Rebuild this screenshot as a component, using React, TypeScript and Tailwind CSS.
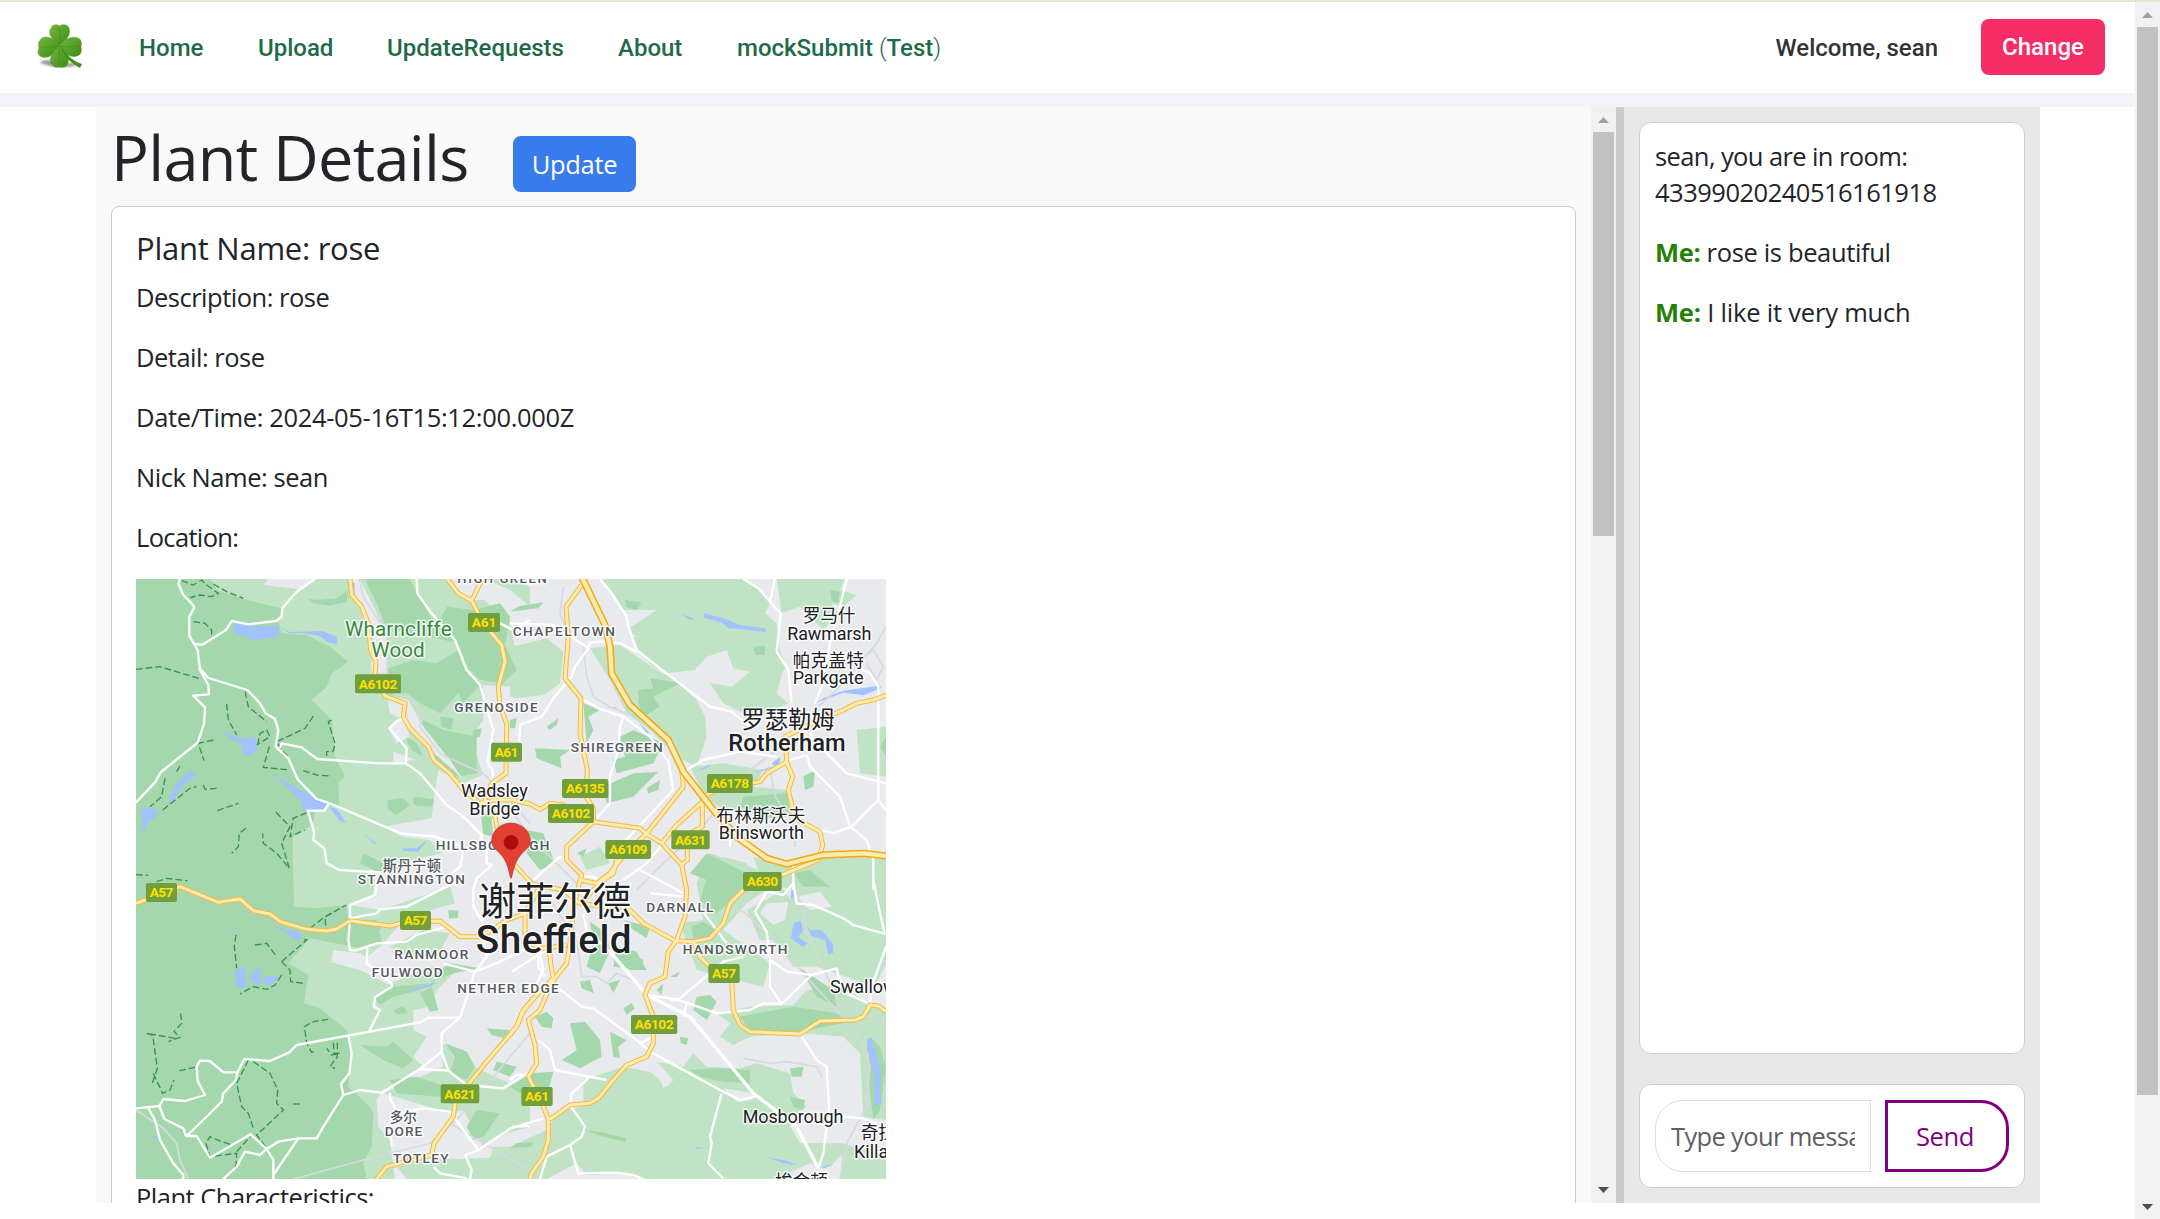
import React from "react";

/* ---------- Map data: four tiles sharing one coordinate system ---------- */

const tileOffsets = ["translate(0 0)", "translate(1140 0)", "translate(0 930)", "translate(1140 930)"];

const lightGreen: string[][] = [
  [
    "18,27 415,27 400,45 510,58 560,27 955,27 1010,90 1060,90 1140,150 1165,290 1150,350 1060,345 1060,450 1025,500 1058,615 1000,640 925,600 915,660 930,700 905,745 760,770 820,800 900,810 935,850 850,870 720,900 735,960 18,960",
    "1060,27 1150,27 1200,50 1200,110 1140,60",
    "1980,870 2268,850 2268,1180 2235,1250 2060,1190 1990,1190 1930,1110 1890,1110 1850,1020 1960,960 1985,990",
    "1700,940 1740,850 1960,925 1850,1000 1780,1080 1920,1180 1900,1250 1700,1200 1650,1060 1720,1050",
  ],
  [
    "0,232 110,205 160,245 150,340 100,375 20,385 0,380",
    "275,27 705,27 750,60 780,100 765,130 800,160 810,240 835,310 810,350 845,395 740,445 700,430 640,400 600,340 665,350 720,305 670,295 650,240 590,260 555,300 470,310 430,290 380,240 345,160 345,130 310,70",
    "240,235 330,225 440,300 480,320 560,390 585,440 590,500 560,590 500,560 420,480 350,430 300,330",
    "800,27 1005,27 990,60 1040,75 1000,110 965,100 985,130 940,180 870,110 815,130",
    "1040,480 1128,470 1128,620 1050,610",
    "540,590 640,580 760,600 730,650 830,660 840,740 770,740 650,720 590,690",
    "730,860 830,885 930,870 960,960 850,960 760,940",
    "640,860 710,880 730,940 620,930 540,910 600,880",
    "210,860 270,830 300,880 230,900",
    "1060,865 1128,865 1128,960 1080,960",
  ],
  [
    "18,0 735,0 730,45 660,75 750,90 960,20 975,70 830,110 760,190 690,250 600,245 690,270 790,320 850,330 850,450 890,470 850,530 880,560 830,600 760,630 740,660 745,740 780,780 795,897 18,897",
    "780,200 880,150 960,160 920,230 850,240",
    "760,320 890,260 980,270 920,330 900,380 850,390 760,380 730,360",
    "930,490 1000,510 1030,560 1140,610 1200,600 1200,740 1130,760 1060,800 1000,690 960,700 760,640 850,600 940,560",
    "800,860 900,840 1080,833 1090,800 1200,800 1200,897 830,897",
  ],
  [
    "220,600 340,560 420,575 470,620 490,600 440,545 520,560 550,520 590,560 690,565 740,550 840,580 850,640 890,680 830,720 870,790 1000,790 1000,820 960,860 900,850 830,880 860,897 400,897 340,880 230,885 200,850 110,897 0,897 0,800 110,750 150,690 220,680",
    "850,30 900,0 1128,0 1128,240 1080,320 970,250 930,230 860,200 800,150 760,90 830,90",
    "620,400 720,380 850,375 890,330 990,320 1080,370 1128,400 1128,720 1060,710 1050,520 1000,470 880,460 720,470 670,495 630,470 660,430",
    "1000,790 1128,830 1128,897 990,897",
  ],
];

const forest: string[][] = [
  [
    "18,27 240,27 262,60 340,88 455,115 445,155 455,190 530,195 600,230 655,275 605,310 590,350 545,390 605,450 615,560 645,620 625,640 628,705 560,700 548,765 488,800 490,960 18,960",
    "705,27 840,27 862,75 905,145 1050,165 1010,200 965,215 900,200 770,175 740,100",
    "775,295 850,270 920,280 985,240 1010,300 1050,345 1000,400 985,370 930,430 870,400 830,370 775,375",
    "950,110 1030,120 1110,100 1140,140 1125,225 1160,300 1120,340 1050,330 1010,290 975,200 925,160",
    "530,85 560,90 620,85 655,60 650,95 600,107 550,100",
    "850,680 935,690 900,710 850,705",
    "772,690 820,685 840,705 800,735 775,720",
    "880,450 940,480 1040,500 1040,610 980,620 910,560 860,480",
    "820,495 860,520 880,560 845,540",
    "1050,720 1085,740 1090,800 1050,790",
    "930,440 970,445 965,480 935,470",
    "1030,480 1055,475 1050,500 1025,505",
    "700,850 760,880 840,890 740,905 690,880",
    "1680,910 1730,850 1850,910 1840,960 1760,1030 1710,990 1730,930",
    "1190,780 1240,790 1275,880 1230,900 1190,850",
    "1380,1055 1430,1090 1440,1140 1410,1210 1370,1190 1390,1120",
    "1460,1130 1540,1170 1530,1200 1450,1190",
    "1350,1235 1380,1230 1392,1270 1355,1255",
  ],
  [
    "30,108 100,97 85,115 0,125",
    "345,90 395,97 380,120 350,112",
    "730,230 765,228 765,255 735,255",
    "385,360 430,355 420,325 510,340 430,380 450,410 400,440 385,400",
    "330,500 370,480 460,520 430,580 320,610 310,570 345,560",
    "220,400 270,420 235,440 250,480 230,520",
    "110,470 145,445 140,465 120,480",
    "75,535 180,540 150,560 155,595 80,565",
    "280,650 370,610 445,605 370,680 290,700",
    "410,655 450,630 445,660 415,670",
    "880,620 915,600 910,650 885,660",
    "700,680 830,670 845,740 760,745 690,710",
    "960,60 990,65 985,100 965,95",
    "200,850 230,835 220,860",
    "850,910 900,900 960,950 880,950",
    "1110,530 1128,500 1128,560",
    "0,450 20,445 15,475 0,475",
  ],
  [
    "18,0 490,0 492,80 560,85 650,75 655,120 740,120 755,185 690,205 540,175 475,250 535,285 522,370 570,385 650,450 665,520 655,620 720,680 730,700 725,800 700,850 710,897 18,897",
    "735,355 785,320 900,310 850,335 790,350 750,375",
    "690,495 770,500 790,485 850,540 820,565 760,540",
    "870,340 905,320 925,390 900,395",
    "930,270 960,250 1050,265 970,280 920,300",
    "955,90 985,92 983,115 957,115",
    "690,150 760,130 740,170 700,180",
    "945,490 1010,515 1035,560 1010,600 960,580 975,530",
    "780,600 860,590 950,620 930,650 800,640",
    "1040,690 1110,700 1060,770 1030,780 1010,740",
    "1070,445 1140,450 1120,475 1085,465",
    "790,390 820,378 832,400 800,403",
    "1100,545 1160,560 1140,590 1090,570",
  ],
  [
    "330,200 380,215 410,270 360,270 310,240",
    "545,140 580,125 620,150 595,185 550,180",
    "180,430 225,425 270,480 275,530 210,565 155,540 200,510",
    "300,455 350,480 325,500 330,535 310,530",
    "75,410 110,395 130,415 125,445 95,440",
    "560,350 600,345 620,365 590,420 550,390",
    "850,380 980,400 1020,425 870,455 720,450 690,410",
    "870,265 910,290 970,330 980,380 920,350",
    "540,570 630,565 720,570 720,610 640,605 570,590",
    "840,650 885,660 880,690 850,680",
    "220,750 270,755 350,775 345,785 280,770",
    "60,580 130,575 110,650 30,640 0,620",
    "1080,470 1110,500 1128,560 1110,690 1090,720 1075,600",
    "840,565 880,560 875,590 845,590",
    "340,120 420,140 410,175 370,150",
    "480,290 510,275 500,292",
    "440,330 460,310 455,345",
    "340,385 365,370 375,385 350,405",
    "510,470 535,475 530,495 512,490",
    "295,310 330,300 310,340",
    "20,790 70,785 65,800 0,805",
  ],
];

const townPatches: string[][] = [
  [
    "660,27 690,27 740,130 770,200 772,310 722,310 725,250 690,110",
    "770,375 835,390 880,470 960,570 1000,630 970,600 900,540 820,450 780,430",
    "775,475 820,440 840,500 800,520",
    "790,545 860,570 790,580",
    "915,660 1000,640 1050,700 1060,800 900,790 770,775 905,745",
  ],
  ["820,300 870,280 860,350 835,400 800,370", "250,120 440,120 350,180 380,200 300,200"],
  ["610,210 690,220 740,250 660,250 605,245"],
  ["440,560 490,600 460,625", "770,70 835,65 825,120 790,135 750,100", "860,50 930,35 965,80 900,90", "640,625 735,640 725,660 680,665"],
];

const water: string[][] = [
  [
    "308,158 355,168 445,168 445,200 375,211 315,190",
    "445,170 480,186 575,183 620,200 622,222 590,215 570,198 520,190 480,190",
    "283,483 335,506 375,500 383,540 342,563 337,525 290,500",
    "183,601 200,618 165,640 118,707 115,690 140,640",
    "30,718 70,712 85,737 55,755 45,782 33,778 38,740",
    "432,612 500,655 560,685 597,700 585,722 515,722 518,700 470,650",
    "597,710 622,718 648,758 630,753",
    "700,788 738,820 735,824",
    "815,835 860,835 890,812 865,845 820,842",
    "265,435 272,472 266,460",
    "668,38 674,38 673,70",
  ],
  [
    "583,130 650,148 690,165 765,175 768,187 700,178 655,175 635,158 580,142",
    "515,132 555,148 540,150",
    "915,400 940,385 1000,362 1085,350 1115,348 1110,356 1060,376 1000,368 940,390",
    "790,575 812,560 806,588 786,585",
    "385,455 420,490 410,490",
    "555,605 605,582 590,595",
    "730,608 790,588 770,600",
    "290,412 320,412 315,418",
  ],
  [
    "330,262 352,264 345,290 354,318 335,326 318,318 316,275",
    "358,290 380,264 396,264 387,290 395,320 370,310",
    "400,288 450,290 420,318 402,308",
    "467,150 508,150 514,178 500,180 470,162",
    "435,142 465,144 458,154",
    "283,152 320,165 315,168",
    "845,330 900,312 920,297 905,318 850,334",
    "50,767 105,769 70,773",
    "605,165 620,152 615,163",
  ],
  [
    "850,130 872,122 880,150 865,172 893,190 880,202 862,190 843,175",
    "878,120 900,150 935,150 968,190 970,218 955,225 945,180 905,168",
    "1072,478 1085,472 1098,520 1112,570 1110,640 1115,670 1095,678 1088,560 1070,500",
    "770,832 830,842 863,856 820,850",
    "930,860 970,852 945,865",
    "845,30 855,30 850,58 842,52",
    "552,803 598,801 560,807",
  ],
];

const rails: string[][] = [
  [
    "688,27 700,80 745,150 770,200 772,310",
    "790,370 840,380 868,420 870,470 930,550 990,580 1060,610 1110,660 1200,760",
  ],
  [
    "160,50 150,130 170,180 220,230 230,320 250,380 300,410 370,440",
    "380,960 480,860 560,790 720,600 800,540 890,440 980,360 1100,220 1128,170",
    "10,730 60,800 130,870 200,940",
    "780,600 795,680 850,760 855,830",
    "1060,260 1090,240 1120,290 1100,330 1070,280",
  ],
  ["18,690 100,745 140,790 150,840 175,897", "490,897 700,840 900,790 980,720 1200,460", "960,730 1060,790 1190,865"],
  [
    "120,60 200,180 215,290 260,290 290,310 320,280 370,300",
    "640,90 700,95 760,150 880,280 980,390 1050,480 1080,560 1070,680 1010,790 990,897",
    "700,535 780,550 830,545 920,560 935,590",
    "860,30 900,180 960,310 990,370 1128,430",
  ],
];

const localRoads: string[][] = [
  [
    "150,27 145,42 160,75 185,100 193,112 178,140 178,198 203,240 210,300 235,345 237,373 190,377 225,412 222,462 203,518 92,607 75,637 18,697",
    "555,27 500,65 457,115 455,140 438,153 355,163 305,153 288,180 217,224 195,222",
    "212,298 235,324 352,360 390,400 407,430 435,447 445,480 437,530 475,565 503,628 560,687 597,699 812,790 915,800 1000,830",
    "450,535 455,520 515,532 562,567 750,580 828,580 870,610 950,705 1000,740 1060,800",
    "828,580 830,535 778,475 800,453 820,445",
    "597,699 583,722 533,722 552,785 550,810 583,835 590,880 628,900 750,907",
    "860,27 862,70 905,130 975,210 1010,300 1050,345 1090,480 1072,575 1088,600 1088,650",
    "1110,160 1150,180 1200,150",
    "1050,800 1070,830 1070,880 1085,885 1040,925 1030,960 1030,1010 1060,1060",
    "1000,845 990,890 940,935",
    "1145,1205 1240,1145 1300,1120",
    "1225,1150 1225,1190 1245,1220",
  ],
  [
    "270,27 305,70 350,140 355,170 380,240 450,295 600,410 665,425 720,470",
    "0,160 130,165 235,235 240,218 270,215 330,220 380,245",
    "235,235 195,290 185,320 130,385 95,440 30,465 28,520",
    "213,385 265,415 340,440 420,500 475,575 490,660 405,750 330,830",
    "340,440 330,470 325,540 300,620 300,700 260,745",
    "530,600 580,570 690,545 800,560",
    "700,27 745,55 780,95 812,130 800,245 835,300 845,400",
    "795,27 780,95",
    "1010,27 985,130 960,220 935,350 915,400",
    "1040,290 1080,310 1105,350 1105,690 1025,770 970,790 900,770 870,750",
    "900,500 1010,610 1128,640",
    "840,570 890,555 900,590 990,680 1020,770 1070,810 1090,870 1090,960",
    "1105,690 1128,720",
    "850,880 850,960",
    "900,490 960,560",
    "660,790 660,830",
    "70,930 150,860 170,865",
    "210,920 250,920 300,960",
    "340,930 410,880 460,820",
    "390,900 520,970",
  ],
  [
    "18,685 88,678 100,657 165,663 225,645 203,603 200,560 210,542 240,543 280,577 322,577 343,537 420,543 478,517 500,495 870,427 895,413 990,413",
    "322,577 318,600 280,640 275,665 235,705 170,768",
    "88,678 103,717 160,745 168,768 200,768 240,833 362,763 410,807 430,840 430,897",
    "410,807 445,785 505,775 560,775 580,740 640,645 690,630 755,638 870,567 935,515 935,460 990,413 1035,275 1100,250 1200,200",
    "655,467 665,520 658,580 633,612 640,645",
    "718,452 750,390 732,380 735,352 785,320 785,310 710,250 712,205",
    "410,807 390,825 345,815 320,860 280,897",
    "505,775 430,885",
    "55,685 75,720 90,780 130,850 160,885 160,897",
    "740,0 735,45 660,75 660,122 655,180 660,210 675,212 740,190 830,185 860,165 950,140",
    "660,115 740,100 750,88 830,80 960,15 1000,0",
    "780,638 780,655 805,700 780,750 785,800",
    "805,700 880,685 960,695 1000,750 1045,810 1150,740 1200,738",
    "870,567 955,572 1010,615 1120,625 1200,575",
    "935,515 955,572",
    "1045,810 1005,825 1025,870 1020,897",
    "910,860 930,880 1010,895",
    "940,250 1035,275 1070,230 1060,170",
  ],
  [
    "300,215 410,345",
    "410,345 480,355 520,365 620,400 720,390 760,370 815,372 905,285 980,265 985,290 1010,340 1075,370",
    "85,480 120,510 135,570 290,600",
    "140,320 215,380 250,385 380,480 420,515 520,570 640,635 690,660 735,650",
    "635,640 600,770 605,790 595,850 640,895",
    "875,470 920,540 950,560 957,680 940,820 925,865",
    "0,745 100,715",
    "180,675 225,740 215,770 180,795 110,830 90,897",
    "180,795 205,880 320,878 370,885 400,897",
    "180,675 185,640 235,595",
    "770,35 735,95 770,155 780,240 780,320 815,372",
    "770,35 820,45 850,10 860,70 910,75 1000,115 1030,135 1120,160",
    "560,70 650,190",
    "780,240 830,275 905,285",
    "1090,0 1110,100 1125,165",
    "1128,200 1085,320 1080,375",
    "700,230 640,245 510,355 480,360",
    "530,370 520,410",
    "430,470 390,490",
    "85,200 100,270 70,330",
    "220,100 230,150 300,215",
    "1000,710 1060,715 1100,730",
    "0,600 20,585 55,585",
    "420,40 525,50",
  ],
];

const arterialWhite = ["1440,1145 1550,1275 1680,1340 1870,1570 2000,1670 2065,1795"];

const primaryRoads = [
  "660,27 665,75 695,110 715,160 722,240 738,275 735,315 765,378 825,400 820,440 840,475 895,530 912,570 960,610 1000,660 1050,700 1095,690 1150,690 1200,702 1230,718 1260,700 1300,705 1390,755 1530,775 1555,795 1595,820 1640,765 1712,700 1730,675 1780,650 1890,635 1910,610 1970,575 1965,500 2040,462 2140,420 2180,400 2230,390 2270,375",
  "952,27 985,70 1025,92 1060,160 1115,225 1125,275 1105,350 1110,410 1130,460 1128,610 1085,640 1065,690 1095,740 1105,790 1150,880 1205,940 1230,950 1185,1030 1130,1050 1080,1085 1040,1100",
  "1057,27 1025,92",
  "1355,45 1308,110 1315,200 1305,325 1353,385 1350,490 1372,600 1368,680 1390,715 1390,755 1310,830 1310,870 1355,915 1345,950 1330,1020 1320,1120 1310,1180 1270,1230",
  "1550,790 1590,740 1660,650 1655,600",
  "1717,700 1717,770 1672,795 1672,870 1655,885",
  "1595,820 1655,885 1670,960 1665,1040 1640,1110 1615,1145 1605,1220 1560,1240 1545,1275 1570,1340 1570,1420 1550,1460 1490,1485 1450,1530 1405,1585 1380,1600 1320,1605 1265,1645 1255,1647 1255,1710 1240,1760 1205,1810 1200,1827",
  "1550,790 1470,870 1440,910 1400,940 1350,930",
  "1460,870 1450,910 1420,930 1350,1000",
  "1215,945 1300,960 1350,1000 1420,1010 1490,1010",
  "1185,1030 1185,1090 1200,1120 1240,1135 1310,1125",
  "1258,1130 1262,1180 1270,1225 1215,1280 1180,1320 1165,1360 1140,1395",
  "1970,575 1988,620 1975,660 1995,745 2070,785 2078,825 2065,870 1955,915 1840,960 1800,1000 1780,1060 1740,1105 1690,1115 1635,1112 1540,1060 1490,1010",
  "1690,1115 1710,1160 1740,1190 1805,1230 1810,1320 1830,1365 1860,1385 2010,1392 2070,1353 2175,1350 2200,1340 2220,1305 2245,1308 2270,1325",
  "18,1000 60,985 150,950 265,997 330,987 370,1022 422,1033 450,1055 530,1078 590,1083 620,1077 660,1052 780,1068 830,1055 930,1053 990,1100 1060,1100",
  "740,1827 770,1790 905,1755 912,1720 970,1640 975,1600 1010,1550 1070,1475 1160,1370 1175,1330 1215,1280",
  "1255,1647 1240,1610 1195,1520 1220,1480 1215,1425 1195,1350 1230,1320 1255,1260 1275,1225",
];

const motorway = "1355,20 1425,165 1440,230 1445,310 1500,405 1615,510 1660,605 1750,720 1820,800 1910,865 1970,882 2080,855 2200,850 2270,858";

const trails: string[][] = [
  [
    "155,32 190,45 215,30 230,45 265,70 245,80 210,75 180,83",
    "250,42 290,65 340,85",
    "190,155 225,160 245,180 245,200",
    "18,298 90,290 212,327",
    "345,365 355,410 410,455",
    "290,402 295,450 320,495",
    "550,438 525,475 440,515 455,540 480,565",
    "605,450 595,455 615,520 610,543 590,545 590,570",
    "250,510 205,520 222,572",
    "383,525 390,490 410,480 420,500 380,525",
    "418,530 400,592 480,600",
    "520,602 560,615 605,618",
    "150,588 140,605",
    "105,625 95,680 60,710",
    "98,720 180,655 200,650",
    "220,645 225,658 265,655",
    "262,722 325,700",
    "348,775 328,790 325,830 305,850",
    "438,727 480,770 455,820 478,895 440,850 400,820 398,790",
    "530,728 490,745 480,800 525,780",
    "18,914 55,916",
    "80,935 110,925 172,932",
  ],
  [],
  [
    "540,145 585,110 648,75",
    "605,100 585,110 588,150",
    "318,165 313,200 320,265",
    "375,195 410,190 440,230",
    "455,245 530,180 515,178",
    "455,245 480,270 482,305 520,310",
    "455,285 435,315 410,328 370,320 330,342",
    "152,400 155,430 132,455 150,472 115,485",
    "135,475 50,460 68,465 82,565 65,615",
    "70,580 98,640 120,630 132,600",
    "148,572 195,562",
    "595,418 550,425 523,440 530,490 545,517 560,512",
    "355,540 320,610 335,680 355,700 372,750",
    "370,545 420,580 443,630 440,670 460,690 380,765 410,805",
    "490,672 510,672",
    "610,488 612,520 630,520 605,525 590,505",
    "622,488 622,530 600,560 615,565",
    "300,793 270,783 240,770 228,790 240,830 320,820 318,855 290,893",
    "320,815 360,770",
  ],
  [],
];

type Label = { t: string; x: number; y: number; w?: number; s: number; k?: "area" | "town" | "city" | "park" };

const labels: Label[] = [
  { t: "HIGH GREEN", x: 982, y: 40, w: 268, s: 39, k: "area" },
  { t: "CHAPELTOWN", x: 1148, y: 198, w: 307, s: 41, k: "area" },
  { t: "GRENOSIDE", x: 973, y: 426, w: 250, s: 41, k: "area" },
  { t: "SHIREGREEN", x: 1322, y: 545, w: 276, s: 41, k: "area" },
  { t: "HILLSBOROUGH", x: 917, y: 840, w: 341, s: 41, k: "area" },
  { t: "斯丹宁顿", x: 758, y: 902, w: 175, s: 43, k: "area" },
  { t: "STANNINGTON", x: 683, y: 941, w: 322, s: 41, k: "area" },
  { t: "RANMOOR", x: 793, y: 1166, w: 222, s: 41, k: "area" },
  { t: "FULWOOD", x: 725, y: 1220, w: 213, s: 41, k: "area" },
  { t: "NETHER EDGE", x: 982, y: 1270, w: 304, s: 41, k: "area" },
  { t: "多尔", x: 779, y: 1656, w: 82, s: 41, k: "area" },
  { t: "DORE", x: 764, y: 1698, w: 113, s: 41, k: "area" },
  { t: "TOTLEY", x: 789, y: 1780, w: 167, s: 41, k: "area" },
  { t: "DARNALL", x: 1549, y: 1026, w: 201, s: 41, k: "area" },
  { t: "HANDSWORTH", x: 1658, y: 1153, w: 314, s: 41, k: "area" },
  { t: "Wharncliffe", x: 645, y: 197, w: 320, s: 62, k: "park" },
  { t: "Wood", x: 724, y: 260, w: 160, s: 62, k: "park" },
  { t: "Wadsley", x: 993, y: 682, w: 200, s: 54 },
  { t: "Bridge", x: 1018, y: 735, w: 152, s: 54 },
  { t: "罗马什", x: 2018, y: 157, w: 158, s: 53 },
  { t: "Rawmarsh", x: 1972, y: 210, w: 252, s: 54 },
  { t: "帕克盖特", x: 1988, y: 290, w: 214, s: 53 },
  { t: "Parkgate", x: 1988, y: 343, w: 213, s: 54 },
  { t: "罗瑟勒姆", x: 1834, y: 473, w: 280, s: 70 },
  { t: "Rotherham", x: 1795, y: 543, w: 352, s: 71, k: "city" },
  { t: "布林斯沃夫", x: 1759, y: 755, w: 267, s: 53 },
  { t: "Brinsworth", x: 1766, y: 808, w: 256, s: 54 },
  { t: "谢菲尔德", x: 1043, y: 1036, w: 460, s: 115 },
  { t: "Sheffield", x: 1037, y: 1149, w: 468, s: 116, k: "city" },
  { t: "Swallownest", x: 2100, y: 1268, s: 54 },
  { t: "Mosborough", x: 1838, y: 1659, w: 302, s: 54 },
  { t: "奇拉马什", x: 2192, y: 1708, s: 53 },
  { t: "Killamarsh", x: 2172, y: 1763, s: 54 },
  { t: "埃金顿", x: 1935, y: 1853, w: 159, s: 53 },
];

const badges: [string, number, number, number][] = [
  ["A61", 1014, 129, 96],
  ["A6102", 675, 313, 138],
  ["A61", 1083, 518, 93],
  ["A6135", 1296, 627, 139],
  ["A6102", 1254, 702, 138],
  ["A6178", 1731, 612, 137],
  ["A6109", 1426, 810, 137],
  ["A631", 1624, 781, 115],
  ["A630", 1839, 906, 116],
  ["A57", 48, 939, 93],
  ["A57", 810, 1023, 93],
  ["A57", 1735, 1182, 94],
  ["A6102", 1503, 1335, 139],
  ["A621", 932, 1543, 116],
  ["A61", 1174, 1551, 94],
];

const labelClass = {
  area: "fill-[#55585e] font-medium",
  town: "fill-[#202124]",
  city: "fill-[#202124] font-medium",
  park: "fill-[#37873f]",
};

function Polygons({ data, className }: { data: string[][]; className: string }) {
  return (
    <>
      {data.map((tile, i) => (
        <g key={i} transform={tileOffsets[i]} className={className}>
          {tile.map((p, j) => (
            <polygon key={j} points={p} />
          ))}
        </g>
      ))}
    </>
  );
}

function Lines({ data, className }: { data: string[][]; className: string }) {
  return (
    <>
      {data.map((tile, i) => (
        <g key={i} transform={tileOffsets[i]} className={className}>
          {tile.map((p, j) => (
            <polyline key={j} points={p} />
          ))}
        </g>
      ))}
    </>
  );
}

function LocationMap() {
  return (
    <svg
      viewBox="18 27 2250 1800"
      className="block h-[600px] w-[750px] shrink-0 bg-[#e9eaee] font-[Roboto,'Noto_Sans_CJK_SC',sans-serif] tracking-normal"
    >
      <Polygons data={lightGreen} className="fill-[#c0e3c5]" />
      <Polygons data={forest} className="fill-[#a5d7ad]" />
      <Polygons data={townPatches} className="fill-[#e9eaee]" />
      <Polygons data={water} className="fill-[#a2c2fc]" />
      <Lines data={rails} className="fill-none stroke-[#d6d9de] stroke-[5px]" />
      <Lines data={trails} className="fill-none stroke-[#39924a] stroke-[4px] [stroke-dasharray:20_9]" />
      <Lines data={localRoads} className="fill-none stroke-white stroke-[7px] [stroke-linejoin:round]" />
      <g className="fill-none stroke-white stroke-[10px]">
        {arterialWhite.map((p) => (
          <polyline key={p} points={p} />
        ))}
      </g>
      <g className="fill-none stroke-[#f2b93c] stroke-[15px] [stroke-linejoin:round]">
        {primaryRoads.map((p) => (
          <polyline key={p} points={p} />
        ))}
      </g>
      <g className="fill-none stroke-[#ffebb0] stroke-[9px] [stroke-linejoin:round]">
        {primaryRoads.map((p) => (
          <polyline key={p} points={p} />
        ))}
      </g>
      <polyline points={motorway} className="fill-none stroke-[#efaa12] stroke-[22px] [stroke-linejoin:round]" />
      <polyline points={motorway} className="fill-none stroke-[#ffebb0] stroke-[13px] [stroke-linejoin:round]" />
      {badges.map(([t, x, y, w]) => (
        <g key={`${t}-${x}`}>
          <rect x={x} y={y} width={w} height={57} rx={6} className="fill-[#719f3c]" />
          <text x={x + 11} y={y + 43} fontSize={41} textLength={w - 22} className="fill-[#ffe100] font-bold">
            {t}
          </text>
        </g>
      ))}
      {labels.map((l) => (
        <text
          key={`${l.t}-${l.x}`}
          x={l.x}
          y={l.y}
          fontSize={l.s}
          textLength={l.w}
          className={`stroke-white/80 stroke-[9px] [paint-order:stroke] [stroke-linejoin:round] ${labelClass[l.k ?? "town"]}`}
        >
          {l.t}
        </text>
      ))}
      <path
        d="M1143 925c-4 0-5-40-27-68-16-19-31-24-31-43a58 55 0 0 1 116 0c0 19-15 24-31 43-22 28-23 68-27 68z"
        className="fill-[#e24033] stroke-[#b8342a] stroke-2"
      />
      <circle cx="1143" cy="817" r="22" className="fill-[#ab0d0d]" />
    </svg>
  );
}

/* ---------- Page chrome ---------- */

function Clover() {
  return (
    <svg viewBox="0 0 48 50" className="h-[50px] w-12">
      <defs>
        <linearGradient id="leaf" x1="0" y1="0" x2="1" y2="1">
          <stop offset="0" stopColor="#76b53c" />
          <stop offset="1" stopColor="#3a8c16" />
        </linearGradient>
        <filter id="soft">
          <feGaussianBlur stdDeviation="0.8" />
        </filter>
      </defs>
      <path d="M4 40q8-4 14 0t16 1q8 0 8 2-10 3-20 2T4 41z" className="fill-[#555]/60" filter="url(#soft)" />
      <g fill="url(#leaf)" className="stroke-[#4f9a2b] stroke-[0.4px]">
        <path d="M23 24C14 16 12 11 15 6c2-4 6-4 8.500-2 3-2 8-2 9.500 2 2 6-1 11-10 18z" />
        <path d="M23 24C17 15 9 13 5 17c-3 3-3 6-2 9-2 4-1 8 3 9 6 2 12-2 17-11z" />
        <path d="M23 24c6-8 14-10 19-8 4 2 4 6 3 9 1 4 0 8-4 9-7 2-13-2-18-10z" />
        <path d="M23 24c-7 6-10 12-8 17 2 4 5 5 8 4 4 1 8 0 9-4 2-6-2-11-9-17z" />
      </g>
      <path d="M24 23c6 9 12 16 22 19l-2 4C35 41 28 35 24 23z" className="fill-[#43901e]" />
      <path d="M23 5q2 9 0 18M4 25q10 1 19-1M44 24q-10 2-20 0M23 44q1-10 0-20" className="fill-none stroke-[#3b8519]/60 stroke-[0.8px]" />
    </svg>
  );
}

function Arrow({ dir }: { dir: "up" | "down" }) {
  return (
    <svg viewBox="0 0 11 6" className="h-1.5 w-[11px]">
      <path d={dir === "up" ? "M0 6 5.500 0 11 6z" : "M0 0 5.500 6 11 0z"} className={dir === "up" ? "fill-[#a3a3a3]" : "fill-[#505050]"} />
    </svg>
  );
}

const navItems = [
  { label: "Home", cls: "ml-[55px] w-[65px]" },
  { label: "Upload", cls: "ml-[54px] w-[76px]" },
  { label: "UpdateRequests", cls: "ml-[53px] w-[177px]" },
  { label: "About", cls: "ml-[54px] w-[65px]" },
];

function Navbar() {
  return (
    <header className="flex h-[91px] shrink-0 items-center bg-white pb-[1px] pl-9 pr-[30px] font-[Roboto,sans-serif] text-2xl font-medium tracking-normal">
      <Clover />
      <nav className="mt-0.5 flex whitespace-nowrap text-[#1f6a4a]">
        {navItems.map((n) => (
          <a key={n.label} className={n.cls}>
            {n.label}
          </a>
        ))}
        <a className="ml-[54px]">
          mockSubmit <span className="font-light">(</span>Test<span className="font-light">)</span>
        </a>
      </nav>
      <span className="ml-auto mt-0.5 text-[#333]">Welcome, sean</span>
      <button className="ml-[43px] h-14 w-[124px] rounded-lg bg-[#f62e67] text-white">Change</button>
    </header>
  );
}

const details = [
  { text: "Description: rose", cls: "tracking-[-0.5px]" },
  { text: "Detail: rose", cls: "tracking-[-0.5px]" },
  { text: "Date/Time: 2024-05-16T15:12:00.000Z", cls: "tracking-[-0.35px]" },
  { text: "Nick Name: sean", cls: "tracking-[-0.45px]" },
  { text: "Location:", cls: "tracking-[-0.65px]" },
];

function PlantPanel() {
  return (
    <section className="flex min-w-0 flex-1 bg-[#f9f9f9]">
      <div className="flex min-w-0 flex-1 flex-col overflow-hidden px-[15px]">
        <div className="flex h-[99px] shrink-0 items-start">
          <h1 className="w-[402px] whitespace-nowrap pt-2.5 text-[63px] leading-[80px] tracking-[-0.7px]">Plant Details</h1>
          <button className="mt-[29px] h-14 w-[123px] rounded-lg bg-[#377bec] text-[25.5px] text-white">Update</button>
        </div>
        <div className="flex h-[1100px] shrink-0 flex-col rounded-lg border border-[#ccc] bg-white px-6 pt-[23px]">
          <h5 className="text-[31px] leading-9 tracking-[-0.25px]">Plant Name: rose</h5>
          <div className="mt-[13px] flex flex-col gap-6 pb-6">
            {details.map((d) => (
              <p key={d.text} className={`leading-9 ${d.cls}`}>
                {d.text}
              </p>
            ))}
          </div>
          <LocationMap />
          <p className="leading-9 tracking-[-0.5px]">Plant Characteristics:</p>
        </div>
      </div>
      <div className="flex w-[25px] flex-col items-center bg-[#f1f1f1] pb-[10px] pt-[10px]">
        <Arrow dir="up" />
        <div className="mt-[9px] h-[404px] w-[21px] bg-[#c1c1c1]" />
        <div className="flex-1" />
        <Arrow dir="down" />
      </div>
    </section>
  );
}

function ChatPanel() {
  return (
    <aside className="flex w-[424px] shrink-0 flex-col border-l-8 border-[#ccc] bg-[#e8e8e8] px-[15px] pt-[15px]">
      <div className="flex h-[932px] flex-col gap-6 rounded-xl border border-[#ccc] bg-white px-[15px] pt-[15px] leading-9">
        <p>
          <span className="tracking-[-0.6px]">sean, you are in room:</span>
          <br />
          <span className="tracking-[-0.5px]">43399020240516161918</span>
        </p>
        <p>
          <b className="text-[#278006]">Me:</b> rose is beautiful
        </p>
        <p className="tracking-[-0.2px]">
          <b className="text-[#278006]">Me:</b> I like it very much
        </p>
      </div>
      <form className="mt-[30px] flex h-[104px] rounded-xl border border-[#ccc] bg-white p-[15px]">
        <div className="flex h-[72px] w-[216px] items-center rounded-l-[28px] border border-[#ddd] px-[15px] text-[#5a6167]">
          <span className="w-full overflow-hidden whitespace-nowrap tracking-[-0.65px]">Type your message</span>
        </div>
        <button className="ml-3.5 h-[72px] w-[125px] rounded-r-[28px] border-[3px] border-[#800080] pr-1 text-[#800080]">Send</button>
      </form>
    </aside>
  );
}

export default function App() {
  return (
    <div className="flex h-[1219px] w-[2160px] flex-col overflow-hidden bg-white font-['Open_Sans',sans-serif] text-[25.5px] tracking-[-0.35px] text-[#212529]">
      <div className="h-0.5 shrink-0 bg-[#e6e3d3]" />
      <div className="flex min-h-0 flex-1">
        <div className="flex min-w-0 flex-1 flex-col">
          <Navbar />
          <div className="h-3.5 shrink-0 bg-[#f4f3f9]" />
          <main className="ml-24 mr-[95px] flex h-[1096px] shrink-0 overflow-hidden">
            <PlantPanel />
            <ChatPanel />
          </main>
        </div>
        <div className="flex w-[25px] shrink-0 flex-col items-center bg-[#f1f1f1] pb-[9px] pt-[10px]">
          <Arrow dir="up" />
          <div className="mt-[9px] h-[1068px] w-[21px] bg-[#c1c1c1]" />
          <div className="flex-1" />
          <Arrow dir="down" />
        </div>
      </div>
    </div>
  );
}
